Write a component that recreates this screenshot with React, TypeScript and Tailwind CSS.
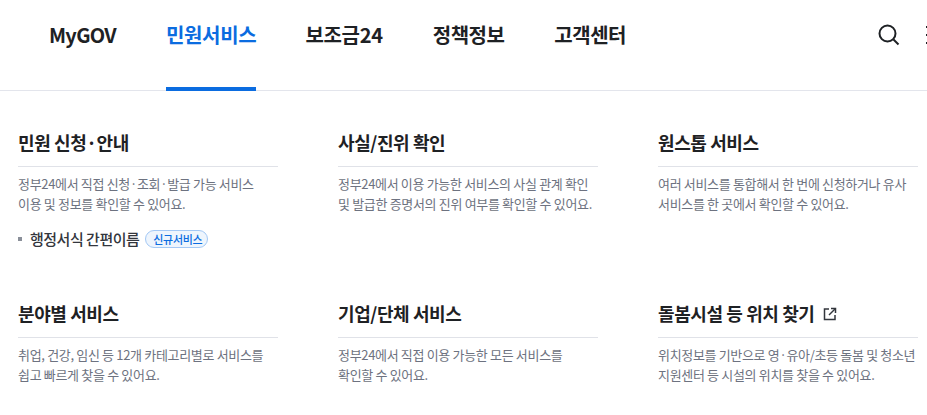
import React from "react";

const NAV_ITEMS = [
  { label: "MyGOV", tracking: "tracking-[-0.7px]" },
  { label: "민원서비스", tracking: "-mr-px tracking-[-0.3px]" },
  { label: "보조금24", tracking: "tracking-[-0.3px]" },
  { label: "정책정보", tracking: "tracking-[-0.5px]" },
  { label: "고객센터", tracking: "tracking-[-0.5px]" },
];

interface Section {
  title: string;
  lines: string[];
  external?: boolean;
  showLink?: boolean;
}

const SECTIONS: Section[] = [
  { title: "민원 신청·안내", lines: ["정부24에서 직접 신청·조회·발급 가능 서비스", "이용 및 정보를 확인할 수 있어요."], showLink: true },
  { title: "사실/진위 확인", lines: ["정부24에서 이용 가능한 서비스의 사실 관계 확인", "및 발급한 증명서의 진위 여부를 확인할 수 있어요."] },
  { title: "원스톱 서비스", lines: ["여러 서비스를 통합해서 한 번에 신청하거나 유사", "서비스를 한 곳에서 확인할 수 있어요."] },
  { title: "분야별 서비스", lines: ["취업, 건강, 임신 등 12개 카테고리별로 서비스를", "쉽고 빠르게 찾을 수 있어요."] },
  { title: "기업/단체 서비스", lines: ["정부24에서 직접 이용 가능한 모든 서비스를", "확인할 수 있어요."] },
  { title: "돌봄시설 등 위치 찾기", lines: ["위치정보를 기반으로 영·유아/초등 돌봄 및 청소년", "지원센터 등 시설의 위치를 찾을 수 있어요."], external: true },
];

function SectionCard({ section }: { section: Section }) {
  return (
    <div className="w-[260px] shrink-0">
      <div className="flex h-[48px] items-center gap-[8px] border-b border-[#e0e2e8] pb-[2px] text-[18px] font-bold leading-[26px] tracking-[-0.4px] text-[#1e2124]">
        <span>{section.title}</span>
        {section.external && (
          <svg width="14" height="14" viewBox="0 0 14 14" fill="none" stroke="#33363d" strokeWidth="1.5" className="mt-[2px]">
            <path d="M6 2H1.5V12.5H12V8" />
            <path d="M8 1.5H12.5V6" />
            <path d="M12.5 1.5L6 8" />
          </svg>
        )}
      </div>
      <p className="mt-[7px] whitespace-nowrap text-[13px] leading-[20px] tracking-[-0.33px] text-[#6d7280]">
        {section.lines[0]}
        <br />
        {section.lines[1]}
      </p>
      {section.showLink && (
        <div className="mt-[15px] flex items-center">
          <span className="h-[4px] w-[4px] bg-[#8a8f99]" />
          <span className="ml-[8px] text-[15px] font-medium leading-[20px] tracking-[-0.5px] text-[#33363d]">행정서식 간편이름</span>
          <span className="ml-[6px] flex h-[18px] items-center rounded-full border border-[#a3c8f5] bg-[#eef5fd] pl-[7px] pr-[5px] text-[11px] font-medium tracking-[-0.3px] text-[#0b6ce0]">
            신규서비스
          </span>
        </div>
      )}
    </div>
  );
}

export default function App() {
  return (
    <div className="h-[415px] w-[927px] overflow-hidden bg-white font-['Noto_Sans_CJK_KR','Noto_Sans',sans-serif]">
      <header className="flex h-[91px] items-center border-b border-[#e3e5ec] pl-[49px]">
        <nav className="flex h-full gap-[50px]">
          {NAV_ITEMS.map((item) => {
            const active = item.label === "민원서비스";
            return (
              <a
                key={item.label}
                className={`-mb-px flex h-[91px] items-center border-b-4 pb-[18px] text-[20px] font-bold ${item.tracking} ${active ? "border-[#0b6ce0] text-[#0b6ce0]" : "border-transparent text-[#1e2124]"}`}
              >
                {item.label}
              </a>
            );
          })}
        </nav>
        <div className="ml-auto flex items-center gap-[25px] pb-[20px]">
          <svg width="24" height="24" viewBox="0 0 24 24" fill="none" stroke="#1e2124" strokeWidth="2">
            <circle cx="10.5" cy="10.5" r="8" />
            <path d="M16.5 16.5L21.5 21.5" />
          </svg>
          <div className="mr-[-17px] flex w-[18px] flex-col gap-[6px]">
            <span className="h-[2px] bg-[#1e2124]" />
            <span className="h-[2px] bg-[#1e2124]" />
            <span className="h-[2px] bg-[#1e2124]" />
          </div>
        </div>
      </header>
      <div className="grid grid-cols-[260px_260px_260px] gap-x-[60px] gap-y-[41px] pl-[18px] pt-[28px]">
        {SECTIONS.map((section) => (
          <SectionCard key={section.title} section={section} />
        ))}
      </div>
    </div>
  );
}
